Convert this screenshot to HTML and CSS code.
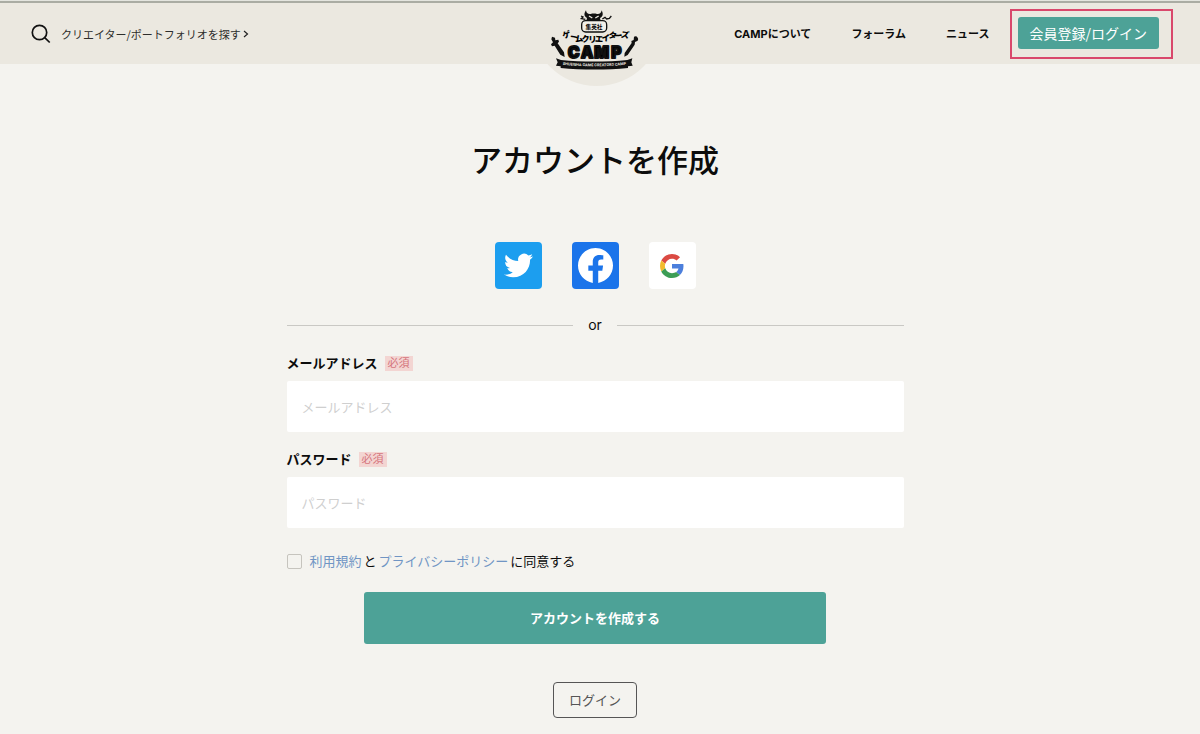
FILE: index.html
```html
<!DOCTYPE html>
<html lang="ja">
<head>
<meta charset="utf-8">
<meta name="viewport" content="width=device-width, initial-scale=1">
<title>アカウントを作成</title>
<link rel="stylesheet" href="styles.css">
</head>
<body>
<header class="header">
  <a class="search" href="#">
    <svg class="search-icon" viewBox="0 0 20 20" aria-hidden="true"><circle cx="8.5" cy="8.5" r="7.2"/><path d="M13.7 13.7l5 4.8"/></svg>
    <span>クリエイター/ポートフォリオを探す</span>
    <svg class="chevron" viewBox="0 0 6 8" aria-hidden="true"><path d="M1 1l3.5 3L1 7"/></svg>
  </a>
  <a class="logo" href="#" aria-label="集英社ゲームクリエイターズCAMP">
    <svg viewBox="0 0 390 285" aria-hidden="true">
      <ellipse class="logo-disc" cx="200" cy="60" rx="198" ry="198"/>
      <path class="ink" d="M168 31c1 9 6 12 14 11 6-2 13-2 19 0 8 1 13-3 14-11 6 12 3 20-5 23l2 8h-43l2-8c-9-4-10-13-3-23z"/>
      <path class="face" d="M177 48l10 6M206 48l-10 6"/>
      <path class="stroke" d="M166 58l-12-2 5-5-6-3M217 57l8-5 5 5 8-2 6-7"/>
      <rect class="badge" x="155" y="62" width="75" height="34" rx="12"/>
      <text class="publisher" x="192" y="86" text-anchor="middle">集英社</text>
      <g class="kana" text-anchor="middle">
        <text transform="translate(112 113) rotate(-16)">ゲ</text>
        <text transform="translate(131 120) rotate(12)">ー</text>
        <text transform="translate(148 125) rotate(-8)">ム</text>
        <text transform="translate(168 126) rotate(-5)">ク</text>
        <text transform="translate(187 126)">リ</text>
        <text transform="translate(207 126) rotate(3)">エ</text>
        <text transform="translate(227 123) rotate(2)">イ</text>
        <text transform="translate(246 115) rotate(12)">タ</text>
        <text transform="translate(265 116) rotate(-5)">ー</text>
        <text transform="translate(284 113) rotate(10)">ズ</text>
      </g>
      <text class="camp" x="131 171 215 259" y="175" text-anchor="middle">CAMP</text>
      <path class="ink" d="M66 110l9 3 1 8 9-2 2 6-4 5 19 27 2 14-13-7-17-27-8 2-3-6 6-6-5-9z"/>
      <path class="ink" d="M312 110a8 8 0 1 1 8 14l-5 2-1 8-21 31-10 5 1-11 21-30-1-6 7-3z"/>
      <path class="ink" d="M78 175l15 5c62 6 138 6 199 0l15-5-3 12 4 10-14 2v5c-62 6-138 6-202 0v-5l-14-2 5-10z"/>
      <path id="ribbon" d="M96 194q97 10 194 0" fill="none"/>
      <text class="ribbon-text" text-anchor="middle"><textPath href="#ribbon" startOffset="50%">SHUEISHA GAME CREATORS CAMP</textPath></text>
    </svg>
  </a>
  <nav class="nav">
    <a href="#">CAMPについて</a>
    <a href="#">フォーラム</a>
    <a href="#">ニュース</a>
  </nav>
  <div class="highlight"><a class="signup" href="#">会員登録/ログイン</a></div>
</header>
<main class="main">
  <h1 class="title">アカウントを作成</h1>
  <div class="socials">
    <button class="social twitter" type="button" aria-label="Twitter">
      <svg width="29" height="29" viewBox="0 0 24 24" aria-hidden="true"><path fill="#fff" d="M23.953 4.57a10 10 0 01-2.825.775 4.958 4.958 0 002.163-2.723c-.951.555-2.005.959-3.127 1.184a4.92 4.92 0 00-8.384 4.482C7.69 8.095 4.067 6.13 1.64 3.162a4.822 4.822 0 00-.666 2.475c0 1.71.87 3.213 2.188 4.096a4.904 4.904 0 01-2.228-.616v.06a4.923 4.923 0 003.946 4.827 4.996 4.996 0 01-2.212.085 4.936 4.936 0 004.604 3.417 9.867 9.867 0 01-6.102 2.105c-.39 0-.779-.023-1.17-.067a13.995 13.995 0 007.557 2.209c9.053 0 13.998-7.496 13.998-13.985 0-.21 0-.42-.015-.63A9.935 9.935 0 0024 4.59z"/></svg>
    </button>
    <button class="social facebook" type="button" aria-label="Facebook">
      <svg width="35" height="35" viewBox="0 0 24 24" aria-hidden="true"><path fill="#fff" d="M24 12.073c0-6.627-5.373-12-12-12s-12 5.373-12 12c0 5.99 4.388 10.954 10.125 11.854v-8.385H7.078v-3.47h3.047V9.43c0-3.007 1.792-4.669 4.533-4.669 1.312 0 2.686.235 2.686.235v2.953H15.83c-1.491 0-1.956.925-1.956 1.874v2.25h3.328l-.532 3.47h-2.796v8.385C19.612 23.027 24 18.062 24 12.073z"/></svg>
    </button>
    <button class="social google" type="button" aria-label="Google">
      <svg width="24" height="24" viewBox="0 0 48 48" aria-hidden="true"><path fill="#db4a43" d="M24 9.5c3.54 0 6.71 1.22 9.21 3.6l6.85-6.85C35.9 2.38 30.47 0 24 0 14.62 0 6.51 5.38 2.56 13.22l7.98 6.19C12.43 13.72 17.74 9.5 24 9.5z"/><path fill="#4c7fdc" d="M46.98 24.55c0-1.57-.15-3.09-.38-4.55H24v9.02h12.94c-.58 2.96-2.26 5.48-4.78 7.18l7.73 6c4.51-4.18 7.09-10.36 7.09-17.65z"/><path fill="#f2bb2e" d="M10.53 28.59c-.48-1.45-.76-2.99-.76-4.59s.27-3.14.76-4.59l-7.98-6.19C.92 16.46 0 20.12 0 24c0 3.88.92 7.54 2.56 10.78l7.97-6.19z"/><path fill="#3c9d55" d="M24 48c6.48 0 11.93-2.13 15.89-5.81l-7.73-6c-2.15 1.45-4.92 2.3-8.16 2.3-6.26 0-11.57-4.22-13.47-9.91l-7.98 6.19C6.51 42.62 14.62 48 24 48z"/></svg>
    </button>
  </div>
  <div class="divider">or</div>
  <form class="form">
    <div class="field">
      <div class="field-head"><label for="email">メールアドレス</label><span class="required">必須</span></div>
      <input class="input" id="email" type="email" placeholder="メールアドレス">
    </div>
    <div class="field">
      <div class="field-head"><label for="password">パスワード</label><span class="required">必須</span></div>
      <input class="input" id="password" type="password" placeholder="パスワード">
    </div>
    <div class="terms">
      <input class="checkbox" id="agree" type="checkbox">
      <label for="agree"><a href="#">利用規約</a>と<a href="#">プライバシーポリシー</a>に同意する</label>
    </div>
    <button class="submit" type="submit">アカウントを作成する</button>
  </form>
  <a class="login" href="#">ログイン</a>
</main>
</body>
</html>
```
FILE: styles.css
```css
* {
  box-sizing: border-box;
}

body {
  margin: 0;
  background: #f4f3ef;
  color: #0c0c0c;
  font-family: Inter, "Noto Sans CJK JP", sans-serif;
  font-size: 13px;
  line-height: 20px;
}

a {
  color: inherit;
  text-decoration: none;
}

button,
input {
  font: inherit;
}

.header {
  position: relative;
  display: flex;
  align-items: center;
  height: 64px;
  padding: 3px 27px 0 31px;
  background: #ebe8e0;
  box-shadow: inset 0 1px #e4e5df, inset 0 3px #aaaca3;
}

.search {
  display: flex;
  align-items: center;
  font-family: "Noto Sans CJK JP", sans-serif;
  font-size: 11px;
  color: #2d2d2b;
}

.search-icon {
  width: 20px;
  height: 20px;
  margin-right: 10px;
  fill: none;
  stroke: #111;
  stroke-width: 1.7;
}

.chevron {
  width: 6px;
  height: 8px;
  margin-left: 2px;
  fill: none;
  stroke: #222;
  stroke-width: 1.2;
}

.logo {
  position: absolute;
  top: 3px;
  left: calc(50% - 70px);
  width: 130px;
  height: 92px;
  overflow: hidden;
}

.logo svg {
  display: block;
  width: 130px;
  height: 95px;
  margin-top: -3px;
}

.logo-disc {
  fill: #ebe8e0;
}

.ink {
  fill: #111;
}

.face {
  fill: none;
  stroke: #ebe8e0;
  stroke-width: 4;
}

.stroke {
  fill: none;
  stroke: #111;
  stroke-width: 4;
}

.badge {
  fill: #f2f0ea;
  stroke: #111;
  stroke-width: 4;
}

.publisher {
  font: 700 17px "Noto Sans CJK JP", sans-serif;
}

.kana {
  font: 900 25px "Noto Sans CJK JP", sans-serif;
}

.camp {
  font: 900 46px Inter, sans-serif;
  stroke: #111;
  stroke-width: 6;
  stroke-linejoin: round;
}

.ribbon-text {
  font: 700 11px Inter, sans-serif;
  fill: #ebe8e0;
}

.nav {
  display: flex;
  gap: 40px;
  margin-left: auto;
  margin-right: 20px;
  font-size: 11px;
  font-weight: 700;
}

.highlight {
  padding: 6px 12px 8px 6px;
  border: 2px solid #d9486c;
}

.signup {
  display: block;
  padding: 6px 12px;
  border-radius: 3px;
  background: #4da297;
  color: #fff;
  font-family: "Noto Sans CJK JP", sans-serif;
  font-size: 14px;
}

.main {
  display: flex;
  flex-direction: column;
  align-items: center;
  padding: 77px 10px 17px 0;
}

.title {
  margin: 0;
  font-size: 31px;
  font-weight: 500;
  line-height: 40px;
}

.socials {
  display: flex;
  gap: 30px;
  margin-top: 61px;
}

.social {
  display: grid;
  place-items: center;
  width: 47px;
  height: 47px;
  padding: 0;
  border: 0;
  border-radius: 4px;
}

.twitter {
  background: #1c9eef;
}

.facebook {
  background: #1b74ea;
}

.google {
  background: #fff;
}

.divider {
  display: flex;
  align-items: center;
  gap: 15px;
  width: 100%;
  max-width: 617px;
  margin-top: 26px;
  font-size: 14px;
}

.divider::before,
.divider::after {
  content: "";
  flex: 1;
  border-top: 1px solid #c9c8c4;
}

.form {
  display: flex;
  flex-direction: column;
  width: 100%;
  max-width: 617px;
  margin-top: 18px;
}

.field {
  margin-bottom: 17px;
}

.field-head {
  display: flex;
  align-items: center;
  gap: 7px;
  margin-bottom: 8px;
  font-weight: 700;
}

.required {
  padding: 0 3px;
  background: #f3d5d2;
  color: #d5747c;
  font-size: 11px;
  font-weight: 400;
  line-height: 15px;
}

.input {
  display: block;
  width: 100%;
  height: 51px;
  padding: 0 15px;
  border: 0;
  border-radius: 2px;
  background: #fff;
}

.input::placeholder {
  color: #cfcfcf;
  opacity: 1;
}

.terms {
  display: flex;
  align-items: center;
  gap: 6px;
  margin-top: 6px;
}

.checkbox {
  appearance: none;
  width: 15px;
  height: 15px;
  margin: 0;
  border: 1px solid #c6c4be;
  border-radius: 2px;
}

.terms a {
  margin: 0 2px;
  color: #7095c4;
}

.submit {
  align-self: center;
  width: 75%;
  height: 52px;
  margin-top: 21px;
  border: 0;
  border-radius: 3px;
  background: #4da297;
  color: #fff;
  font-weight: 700;
}

.login {
  margin-top: 38px;
  padding: 7px 15px;
  border: 1px solid #555;
  border-radius: 4px;
  color: #555;
}
```
